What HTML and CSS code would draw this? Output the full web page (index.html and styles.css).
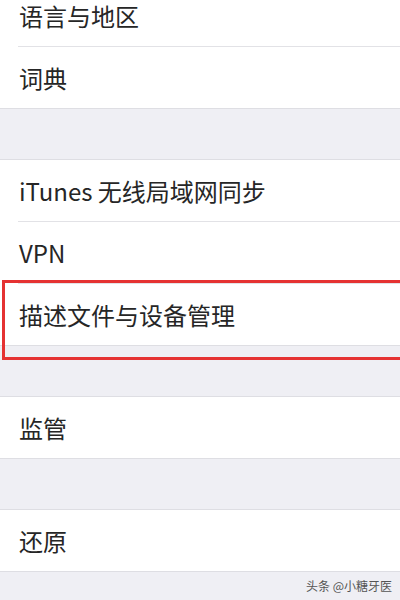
FILE: index.html
```html
<!DOCTYPE html>
<html lang="zh-CN">
<head>
  <meta charset="UTF-8">
  <meta name="viewport" content="width=device-width, initial-scale=1.0">
  <title>通用</title>
  <link rel="stylesheet" href="styles.css">
</head>
<body>

  <!-- 语言 / 词典 -->
  <div class="group first">
    <div class="row">语言与地区</div>
    <div class="row">词典</div>
  </div>

  <!-- 同步 / VPN / 描述文件 -->
  <div class="group">
    <div class="row">iTunes 无线局域网同步</div>
    <div class="row">VPN</div>
    <div class="row marked">描述文件与设备管理</div>
  </div>

  <div class="group">
    <div class="row">监管</div>
  </div>

  <div class="group">
    <div class="row">还原</div>
  </div>

  <footer>
    <p>头条 @小糖牙医</p>
  </footer>

</body>
</html>
```

FILE: styles.css
```css
* {
  margin: 0;
  padding: 0;
  box-sizing: border-box;
}
body {
  font-family: "Noto Sans CJK SC", "Noto Sans", sans-serif;
  background-color: #efeff4;
  color: #262626;
  overflow: hidden;
  height: 600px;
}
.group {
  background-color: white;
  border-top: 1px solid #dedee3;
  border-bottom: 1px solid #dedee3;
  margin-top: 50px;
}
.group.first {
  margin-top: -16px;
}
.row {
  height: 62px;
  margin-left: 18px;
  padding-left: 1px;
  border-bottom: 1px solid #e2e2e6;
  display: flex;
  align-items: center;
  font-size: 24px;
  line-height: 1.15;
}
.row:last-child {
  height: 61px;
  border-bottom: none;
}
.marked {
  position: relative;
}
/* red highlight frame drawn over the row */
.marked::after {
  content: "";
  position: absolute;
  top: -4px;
  bottom: -15px;
  left: -16px;
  right: -10px;
  border: 3px solid #e53232;
}
footer {
  padding-top: 6px;
  padding-right: 8px;
  text-align: right;
  font-size: 12px;
  line-height: 16px;
  color: #555;
}
```
